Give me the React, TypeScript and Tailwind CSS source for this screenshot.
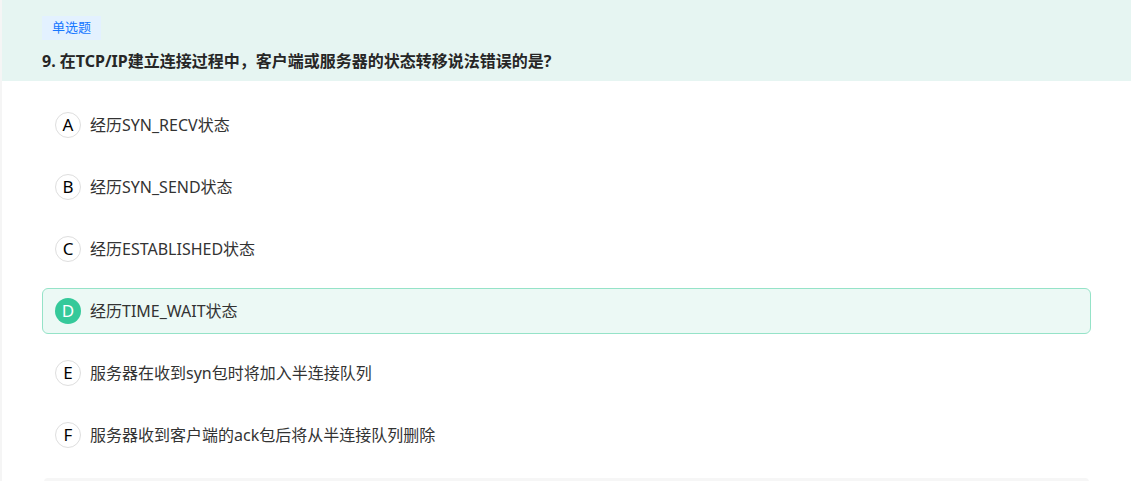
import { useState } from 'react';

interface Option {
  key: string;
  text: string;
}

const options: Option[] = [
  { key: 'A', text: '经历SYN_RECV状态' },
  { key: 'B', text: '经历SYN_SEND状态' },
  { key: 'C', text: '经历ESTABLISHED状态' },
  { key: 'D', text: '经历TIME_WAIT状态' },
  { key: 'E', text: '服务器在收到syn包时将加入半连接队列' },
  { key: 'F', text: '服务器收到客户端的ack包后将从半连接队列删除' },
];

const App = () => {
  const [selected, setSelected] = useState('D');

  return (
    <div
      className="h-[481px] bg-white border-l-2 border-[#f5f5f5] overflow-hidden"
      style={{ fontFamily: '"Noto Sans", "Noto Sans CJK SC", sans-serif' }}
    >
      {/* question header */}
      <div className="h-[81px] bg-[#e6f5f2] px-10 pt-[14px]">
        <span className="inline-flex h-6 items-center px-[10px] bg-[#e3f1ff] text-[#1677ff] text-[13px] leading-none">
          单选题
        </span>
        <h2 className="mt-[9px] text-[16px] font-bold leading-6 text-[#262626]">
          9. 在TCP/IP建立连接过程中，客户端或服务器的状态转移说法错误的是?
        </h2>
      </div>

      {/* options */}
      <div className="px-10 pt-[21px] flex flex-col gap-4">
        {options.map((opt) => {
          const active = opt.key === selected;
          return (
            <div
              key={opt.key}
              onClick={() => setSelected(opt.key)}
              className={
                active
                  ? 'h-[46px] flex items-center gap-[9px] px-3 rounded-md border border-[#95e3c8] bg-[#ecf9f5] cursor-pointer'
                  : 'h-[46px] flex items-center gap-[9px] px-3 rounded-md border border-transparent cursor-pointer'
              }
            >
              <span
                className={
                  active
                    ? 'w-[26px] h-[26px] rounded-full flex items-center justify-center bg-[#35c99a] text-white text-[17px]'
                    : 'w-[26px] h-[26px] rounded-full flex items-center justify-center border border-[#dedede] text-black text-[17px]'
                }
              >
                {opt.key}
              </span>
              <span className="text-[16px] text-[#333]">{opt.text}</span>
            </div>
          );
        })}
      </div>

      <div className="mx-[42px] mt-5 h-10 rounded bg-[#f6f6f6]" />
    </div>
  );
};

export default App;
